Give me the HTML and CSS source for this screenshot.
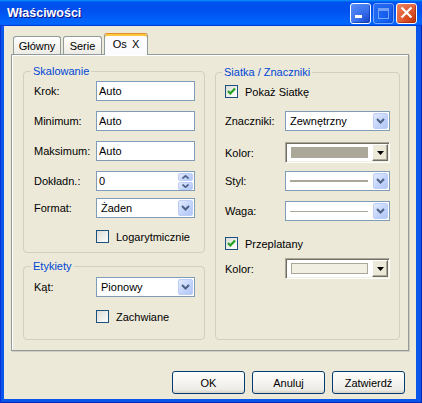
FILE: index.html
```html
<!DOCTYPE html>
<html lang="pl">
<head>
<meta charset="utf-8">
<title>Właściwości</title>
<link rel="stylesheet" href="styles.css">
</head>
<body>
<div class="window">
  <header class="titlebar">
    <span class="title">Właściwości</span>
    <div class="tb-buttons">
      <span class="tb-btn tb-min"><svg width="19" height="19" viewBox="0 0 19 19"><rect x="4" y="11" width="7" height="3" fill="#fff"/></svg></span>
      <span class="tb-btn tb-max"><svg width="19" height="19" viewBox="0 0 19 19"><rect x="4.5" y="4.5" width="10" height="10" fill="none" stroke="#fff"/><rect x="4" y="4" width="11" height="3" fill="#fff"/></svg></span>
      <span class="tb-btn tb-close"><svg width="19" height="19" viewBox="0 0 19 19"><path d="M4.5 3.5 L14.5 13.5 M14.5 3.5 L4.5 13.5" stroke="#fff" stroke-width="2.2" fill="none"/></svg></span>
    </div>
  </header>
  <main class="client">
    <nav class="tabs">
      <div class="tab tab-main">Główny</div>
      <div class="tab tab-series">Serie</div>
      <div class="tab tab-axis active">Os X</div>
    </nav>
    <section class="panel">
      <div class="col col-left">
        <fieldset class="group g-scale">
          <legend>Skalowanie</legend>
          <div class="row mt3"><span class="lbl">Krok:</span><div class="edit">Auto</div></div>
          <div class="row mt10"><span class="lbl">Minimum:</span><div class="edit">Auto</div></div>
          <div class="row mt10"><span class="lbl">Maksimum:</span><div class="edit">Auto</div></div>
          <div class="row mt10"><span class="lbl">Dokładn.:</span>
            <div class="edit spin"><span class="val">0</span>
              <span class="spin-btns">
                <span class="xpbtn spin-btn"><svg width="7" height="4" viewBox="0 0 7 4"><path d="M0.5 3.5 L3.5 0.8 L6.5 3.5" stroke="#4D6185" stroke-width="1.6" fill="none"/></svg></span>
                <span class="xpbtn spin-btn"><svg width="7" height="4" viewBox="0 0 7 4"><path d="M0.5 0.5 L3.5 3.2 L6.5 0.5" stroke="#4D6185" stroke-width="1.6" fill="none"/></svg></span>
              </span>
            </div>
          </div>
          <div class="row mt7"><span class="lbl">Format:</span>
            <div class="combo"><span class="val">Żaden</span><span class="xpbtn drop"><svg width="9" height="6" viewBox="0 0 9 6"><path d="M1 1 L4.5 4.5 L8 1" stroke="#4D6185" stroke-width="2" fill="none"/></svg></span></div>
          </div>
          <div class="row row-check mt12"><span class="lbl"></span><span class="check"></span><span class="ctext">Logarytmicznie</span></div>
        </fieldset>
        <fieldset class="group g-labels">
          <legend>Etykiety</legend>
          <div class="row mt4"><span class="lbl">Kąt:</span>
            <div class="combo"><span class="val">Pionowy</span><span class="xpbtn drop"><svg width="9" height="6" viewBox="0 0 9 6"><path d="M1 1 L4.5 4.5 L8 1" stroke="#4D6185" stroke-width="2" fill="none"/></svg></span></div>
          </div>
          <div class="row row-check mt13"><span class="lbl"></span><span class="check"></span><span class="ctext">Zachwiane</span></div>
        </fieldset>
      </div>
      <div class="col col-right">
        <fieldset class="group g-grid">
          <legend>Siatka / Znaczniki</legend>
          <div class="row row-check mt6"><span class="check checked"><svg width="11" height="11" viewBox="0 0 11 11"><path d="M2 5 L4.3 7.5 L9 2.5" stroke="#21A121" stroke-width="2.2" fill="none"/></svg></span><span class="ctext">Pokaż Siatkę</span></div>
          <div class="row mt13"><span class="lbl">Znaczniki:</span>
            <div class="combo"><span class="val">Zewnętrzny</span><span class="xpbtn drop"><svg width="9" height="6" viewBox="0 0 9 6"><path d="M1 1 L4.5 4.5 L8 1" stroke="#4D6185" stroke-width="2" fill="none"/></svg></span></div>
          </div>
          <div class="row row-color mt11"><span class="lbl">Kolor:</span>
            <div class="colorpick"><span class="swatch"></span><span class="cp-btn"><svg width="7" height="4" viewBox="0 0 7 4"><path d="M0 0 H7 L3.5 4 Z" fill="#000"/></svg></span></div>
          </div>
          <div class="row mt8"><span class="lbl">Styl:</span>
            <div class="combo"><span class="line thick"></span><span class="xpbtn drop"><svg width="9" height="6" viewBox="0 0 9 6"><path d="M1 1 L4.5 4.5 L8 1" stroke="#4D6185" stroke-width="2" fill="none"/></svg></span></div>
          </div>
          <div class="row mt10"><span class="lbl">Waga:</span>
            <div class="combo"><span class="line"></span><span class="xpbtn drop"><svg width="9" height="6" viewBox="0 0 9 6"><path d="M1 1 L4.5 4.5 L8 1" stroke="#4D6185" stroke-width="2" fill="none"/></svg></span></div>
          </div>
          <div class="row row-check mt16"><span class="check checked"><svg width="11" height="11" viewBox="0 0 11 11"><path d="M2 5 L4.3 7.5 L9 2.5" stroke="#21A121" stroke-width="2.2" fill="none"/></svg></span><span class="ctext">Przeplatany</span></div>
          <div class="row row-color mt8"><span class="lbl">Kolor:</span>
            <div class="colorpick"><span class="swatch light"></span><span class="cp-btn"><svg width="7" height="4" viewBox="0 0 7 4"><path d="M0 0 H7 L3.5 4 Z" fill="#000"/></svg></span></div>
          </div>
        </fieldset>
      </div>
    </section>
    <footer class="actions">
      <button class="btn">OK</button>
      <button class="btn">Anuluj</button>
      <button class="btn">Zatwierdź</button>
    </footer>
  </main>
</div>
</body>
</html>
```
FILE: styles.css
```css
* { box-sizing: border-box; }
html, body { margin: 0; padding: 0; }
body {
  width: 422px;
  height: 403px;
  overflow: hidden;
  font-family: "Liberation Sans", Arial, sans-serif;
  font-size: 11px;
  color: #000;
  background: #fff;
}
.window {
  width: 422px;
  height: 403px;
  display: flex;
  flex-direction: column;
  background: #0A55EA;
  box-shadow: inset 1px 0 #0831D9, inset -1px -1px #0028B8;
}
.titlebar {
  height: 26px;
  flex: none;
  display: flex;
  align-items: flex-start;
  justify-content: space-between;
  padding: 0 5px 0 7px;
  background: linear-gradient(180deg, #0997ff, #0053ee 8%, #0050ee 40%, #06f 88%, #06f 93%, #005bff 95%, #003dd7 96%, #003dd7);
}
.title {
  margin-top: 6px;
  color: #fff;
  font-weight: bold;
  font-size: 12.5px;
  line-height: 14px;
  text-shadow: 1px 1px #0F1089;
}
.tb-buttons {
  display: flex;
  gap: 2px;
  margin-top: 3px;
}
.tb-btn {
  width: 21px;
  height: 21px;
  border: 1px solid #fff;
  border-radius: 3px;
  display: block;
}
.tb-btn svg { display: block; }
.tb-min, .tb-max {
  background: radial-gradient(circle at 85% 85%, #1E4FD0 0%, #3A72EE 45%, #5A8EF7 100%);
  box-shadow: inset -1px -1px 1px rgba(0, 30, 140, .5);
}
.tb-max { opacity: .45; }
.tb-close {
  background: radial-gradient(circle at 85% 85%, #C83A10 0%, #E0582E 45%, #EE8A66 100%);
  box-shadow: inset -1px -1px 1px rgba(120, 20, 0, .5);
}
.client {
  flex: 1;
  margin: 0 6px 4px 4px;
  background: #ECE9D8;
  padding: 7px 7px 0 7px;
  display: flex;
  flex-direction: column;
}
.tabs {
  display: flex;
  align-items: flex-end;
  gap: 2px;
  height: 21px;
  flex: none;
  padding-left: 2px;
  position: relative;
  z-index: 1;
}
.tab {
  height: 18px;
  border: 1px solid #919B9C;
  border-bottom: 0;
  border-radius: 3px 3px 0 0;
  background: linear-gradient(#FFFFFF, #F6F5F1 50%, #ECEBE5);
  display: flex;
  align-items: center;
  justify-content: center;
  padding-top: 1px;
}
.tab-main { width: 48px; }
.tab-series { width: 39px; }
.tab-axis { width: 44px; }
.tab.active {
  height: 22px;
  margin-bottom: -1px;
  background: #FCFCFE;
  border-top: 1px solid #E68B2C;
  box-shadow: inset 0 2px 0 #FFC73C;
  padding-top: 0;
  padding-bottom: 2px;
  word-spacing: 2px;
}
.panel {
  height: 297px;
  flex: none;
  border: 1px solid #919B9C;
  background: #ECE9D8;
  display: flex;
  gap: 10px;
  padding: 9px 8px 10px 11px;
  box-shadow: inset 1px 1px 0 #fff, 1px 1px 0 #D0CDBE;
}
.col { display: flex; flex-direction: column; }
.col-left { width: 182px; }
.col-right { width: 185px; padding-top: 1px; }
.col-right .group { flex: 1; }
.group {
  margin: 0;
  border: 1px solid #D0D0BF;
  border-radius: 4px;
  padding: 0 9px 0 10px;
  min-width: 0;
}
.group legend {
  color: #0046D5;
  padding: 0 2px;
  margin-left: -3px;
  line-height: 14px;
  height: 14px;
}
.g-scale { padding-bottom: 9px; }
.g-labels { margin-top: 6px; padding-bottom: 16px; }
.g-grid { padding-left: 9px; padding-right: 8px; }

.row { display: flex; align-items: center; height: 20px; }
.row-check { height: 13px; }
.row-color { height: 21px; }
.mt3 { margin-top: 3px; }
.mt4 { margin-top: 4px; }
.mt6 { margin-top: 6px; }
.mt7 { margin-top: 7px; }
.mt8 { margin-top: 8px; }
.mt10 { margin-top: 10px; }
.mt11 { margin-top: 11px; }
.mt12 { margin-top: 12px; }
.mt13 { margin-top: 13px; }
.mt16 { margin-top: 16px; }

.lbl { flex: none; width: 62px; }
.g-grid .lbl { width: 60px; }

.edit {
  width: 100px;
  height: 20px;
  border: 1px solid #7F9DB9;
  background: #fff;
  padding: 0 2px;
  display: flex;
  align-items: center;
}
.spin { justify-content: space-between; padding: 0 1px 0 2px; }
.spin-btns {
  display: flex;
  flex-direction: column;
  gap: 1px;
  width: 15px;
  height: 17px;
}
.xpbtn {
  border: 1px solid #BCCDF6;
  border-radius: 2px;
  background: linear-gradient(135deg, #E2EAFE 0%, #C6D6FB 50%, #B1C6F7 100%);
  display: flex;
  align-items: center;
  justify-content: center;
}
.xpbtn svg { display: block; }
.spin-btn { flex: 1; }
.combo {
  width: 100px;
  height: 20px;
  border: 1px solid #7F9DB9;
  background: #fff;
  padding: 1px;
  display: flex;
  align-items: center;
}
.g-grid .combo { width: 105px; }
.combo .val { flex: 1; padding-left: 3px; }
.drop { width: 15px; height: 16px; flex: none; }
.line {
  flex: 1;
  height: 1px;
  margin: 0 5px 0 3px;
  background: #ACA899;
}
.line.thick { height: 2px; }

.check {
  flex: none;
  width: 13px;
  height: 13px;
  border: 1px solid #1C5180;
  background: linear-gradient(135deg, #DCDCD7 0%, #F4F4F0 70%, #FFFFFF 100%);
  display: flex;
  align-items: center;
  justify-content: center;
}
.check svg { display: block; }
.ctext { margin-left: 7px; }

.colorpick {
  width: 105px;
  height: 21px;
  display: flex;
  align-items: center;
  gap: 4px;
  padding: 0 1px 0 5px;
  border: 1px solid;
  border-color: #ACA899 #FFFFFF #FFFFFF #ACA899;
  box-shadow: inset 1px 1px 0 #716F64, inset -1px -1px 0 #F1EFE2;
  background: #fff;
}
.swatch {
  width: 77px;
  height: 11px;
  background: #ACA899;
}
.swatch.light {
  background: #F1EFE2;
  border: 1px solid #ACA899;
}
.cp-btn {
  width: 16px;
  height: 17px;
  flex: none;
  background: #ECE9D8;
  border: 1px solid;
  border-color: #FFFFFF #716F64 #716F64 #FFFFFF;
  box-shadow: inset -1px -1px 0 #ACA899;
  display: flex;
  align-items: center;
  justify-content: center;
}
.cp-btn svg { display: block; }

.actions {
  display: flex;
  justify-content: flex-end;
  gap: 7px;
  margin-top: 20px;
  padding-right: 4px;
}
.btn {
  width: 73px;
  height: 23px;
  border: 1px solid #003C74;
  border-radius: 3px;
  background: linear-gradient(180deg, #FFFFFF 0%, #F6F5F1 45%, #ECEBE6 85%, #D6D0C5 100%);
  font: inherit;
  color: #000;
  padding: 0;
  display: flex;
  align-items: center;
  justify-content: center;
}
```
